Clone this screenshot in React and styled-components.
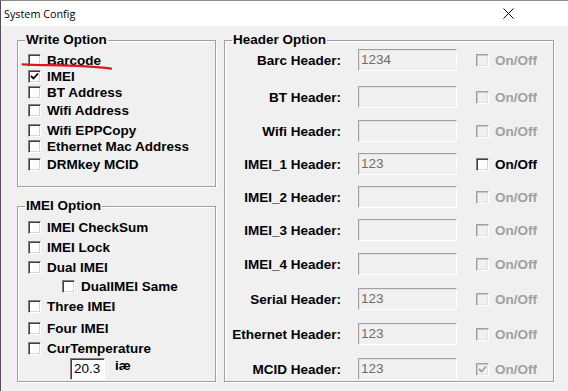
import React from 'react';
import styled, { createGlobalStyle } from 'styled-components';

const GlobalStyle = createGlobalStyle`
    html, body {
        margin: 0;
        padding: 0;
        background: #f0f0f0;
    }
`

const Window = styled.div`
    position: relative;
    width: 568px;
    height: 391px;
    box-sizing: border-box;
    border-top: 1px solid #8a8a8a;
    border-left: 1px solid #5a4a5a;
    background: #f0f0f0;
    overflow: hidden;
    font-family: "Liberation Sans", Arial, sans-serif;
    font-size: 13.5px;
    font-weight: bold;
    color: #000;
`

const TitleBar = styled.div`
    height: 25px;
    background: #fff;
    display: flex;
    align-items: center;
    justify-content: space-between;
    padding: 0 4px 0 3px;
`

const Title = styled.span`
    font-family: "Open Sans", "Noto Sans", sans-serif;
    font-size: 10.8px;
    font-weight: normal;
    color: #000;
`

const CloseButton = styled.div`
    width: 46px;
    height: 25px;
    display: flex;
    align-items: center;
    justify-content: center;
    margin-right: 33px;
`

const Body = styled.div`
    display: flex;
    gap: 8px;
    padding: 7px 0 0 16px;
`

const Column = styled.div`
    display: flex;
    flex-direction: column;
    gap: 12px;
    width: ${props => props.$width}px;
`

const Group = styled.fieldset`
    margin: 0;
    padding: 0;
    min-width: 0;
    height: ${props => props.$height}px;
    box-sizing: border-box;
    border: 1px solid #a0a0a0;
    box-shadow: 1px 1px 0 #fff, inset 1px 1px 0 #fff;
`

const Legend = styled.legend`
    margin-left: 7px;
    padding: 0 1px;
    line-height: 14px;
    font-size: 13.5px;
    font-weight: bold;
`

const List = styled.div`
    display: flex;
    flex-direction: column;
    padding: ${props => props.$top}px 0 0 10px;
`

const Row = styled.div`
    display: flex;
    align-items: center;
    gap: 6px;
    height: 16px;
    margin-top: ${props => props.$gap || 0}px;
    padding-left: ${props => props.$indent || 0}px;
    white-space: nowrap;
`

const Box = styled.span`
    display: inline-flex;
    align-items: center;
    justify-content: center;
    flex: none;
    width: 13px;
    height: 13px;
    box-sizing: border-box;
    border: 1px solid;
    border-color: ${props => props.$disabled ? '#a0a0a0 #fff #fff #a0a0a0' : '#808080 #fff #fff #808080'};
    box-shadow: ${props => props.$disabled
        ? 'inset 1px 1px 0 #c8c8c8, inset -1px -1px 0 #e3e3e3'
        : 'inset 1px 1px 0 #404040, inset -1px -1px 0 #d4d4d4'};
    background: ${props => props.$disabled ? '#f0f0f0' : '#fff'};
`

const Label = styled.span`
    color: ${props => props.$disabled ? '#a0a0a0' : '#000'};
`

const TempRow = styled.div`
    display: flex;
    align-items: flex-start;
    gap: 10px;
    margin-top: 2px;
    padding-left: 42px;
`

const TempInput = styled.div`
    width: 35px;
    height: 22px;
    box-sizing: border-box;
    border: 1px solid;
    border-color: #808080 #fff #fff #808080;
    box-shadow: inset 1px 1px 0 #404040;
    background: #fff;
    font-weight: normal;
    font-size: 13.5px;
    line-height: 20px;
    padding-left: 3px;
`

const Unit = styled.span`
    line-height: 16px;
`

const HeaderList = styled.div`
    display: flex;
    flex-direction: column;
    padding: 2px 0 0 6px;
`

const HeaderRow = styled.div`
    display: flex;
    align-items: center;
    height: 22px;
    margin-top: ${props => props.$gap || 0}px;
    white-space: nowrap;
`

const HeaderLabel = styled.span`
    width: 110px;
    text-align: right;
`

const TextBox = styled.div`
    width: 99px;
    height: 22px;
    margin-left: 17px;
    box-sizing: border-box;
    border: 1px solid;
    border-color: #a0a0a0 #fff #fff #a0a0a0;
    box-shadow: inset 1px 1px 0 #e3e3e3;
    background: #f0f0f0;
    color: #6d6d6d;
    font-weight: normal;
    line-height: 20px;
    padding-left: 2px;
`

const Toggle = styled.div`
    display: flex;
    align-items: center;
    gap: 6px;
    margin-left: 19px;
`

const Scribble = styled.svg`
    position: absolute;
    left: 19px;
    top: 59px;
    pointer-events: none;
`

function Check({ checked, disabled }) {
    return (
        <Box $disabled={disabled}>
            {checked && (
                <svg width="9" height="9" viewBox="0 0 9 9">
                    <polyline points="1,4 3.5,6.5 8,1.5" fill="none"
                        stroke={disabled ? '#a0a0a0' : '#000'} strokeWidth="1.8" />
                </svg>
            )}
        </Box>
    )
}

function Option({ label, checked, gap, indent }) {
    return (
        <Row $gap={gap} $indent={indent}>
            <Check checked={checked} />
            <Label>{label}</Label>
        </Row>
    )
}

const writeOptions = [
    { label: 'Barcode', gap: 0 },
    { label: 'IMEI', gap: 0, checked: true },
    { label: 'BT Address', gap: 0 },
    { label: 'Wifi Address', gap: 2 },
    { label: 'Wifi EPPCopy', gap: 4 },
    { label: 'Ethernet Mac Address', gap: 0 },
    { label: 'DRMkey MCID', gap: 2 },
]

const imeiOptions = [
    { label: 'IMEI CheckSum', gap: 0 },
    { label: 'IMEI Lock', gap: 4 },
    { label: 'Dual IMEI', gap: 4 },
    { label: 'DualIMEI Same', gap: 3, indent: 34 },
    { label: 'Three IMEI', gap: 4 },
    { label: 'Four IMEI', gap: 6 },
    { label: 'CurTemperature', gap: 4 },
]

const headers = [
    { label: 'Barc Header:', value: '1234', gap: 0 },
    { label: 'BT Header:', value: '', gap: 15 },
    { label: 'Wifi Header:', value: '', gap: 12 },
    { label: 'IMEI_1 Header:', value: '123', gap: 11, enabled: true },
    { label: 'IMEI_2 Header:', value: '', gap: 11 },
    { label: 'IMEI_3 Header:', value: '', gap: 11 },
    { label: 'IMEI_4 Header:', value: '', gap: 12 },
    { label: 'Serial Header:', value: '123', gap: 13 },
    { label: 'Ethernet Header:', value: '123', gap: 13 },
    { label: 'MCID Header:', value: '123', gap: 13, checked: true },
]

export default function App() {
    return (
        <>
            <GlobalStyle />
            <Window>
                <TitleBar>
                    <Title>System Config</Title>
                    <CloseButton>
                        <svg width="11" height="11" viewBox="0 0 11 11">
                            <path d="M0.5 0.5 L10.5 10.5 M10.5 0.5 L0.5 10.5" stroke="#000" strokeWidth="1" />
                        </svg>
                    </CloseButton>
                </TitleBar>
                <Body>
                    <Column $width={199}>
                        <Group $height={154}>
                            <Legend>Write Option</Legend>
                            <List $top={5}>
                                {writeOptions.map(o => <Option key={o.label} {...o} />)}
                            </List>
                        </Group>
                        <Group $height={183}>
                            <Legend>IMEI Option</Legend>
                            <List $top={6}>
                                {imeiOptions.map(o => <Option key={o.label} {...o} />)}
                                <TempRow>
                                    <TempInput>20.3</TempInput>
                                    <Unit>iæ</Unit>
                                </TempRow>
                            </List>
                        </Group>
                    </Column>
                    <Column $width={330}>
                        <Group $height={349}>
                            <Legend>Header Option</Legend>
                            <HeaderList>
                                {headers.map(h => (
                                    <HeaderRow key={h.label} $gap={h.gap}>
                                        <HeaderLabel>{h.label}</HeaderLabel>
                                        <TextBox>{h.value}</TextBox>
                                        <Toggle>
                                            <Check checked={h.checked} disabled={!h.enabled} />
                                            <Label $disabled={!h.enabled}>On/Off</Label>
                                        </Toggle>
                                    </HeaderRow>
                                ))}
                            </HeaderList>
                        </Group>
                    </Column>
                </Body>
                <Scribble width="95" height="12" viewBox="0 0 95 12">
                    <path d="M2.5 4.3 C 25 5.8, 60 4.2, 91 8.6" fill="none" stroke="#e3141c"
                        strokeWidth="2.2" strokeLinecap="round" />
                </Scribble>
            </Window>
        </>
    )
}
